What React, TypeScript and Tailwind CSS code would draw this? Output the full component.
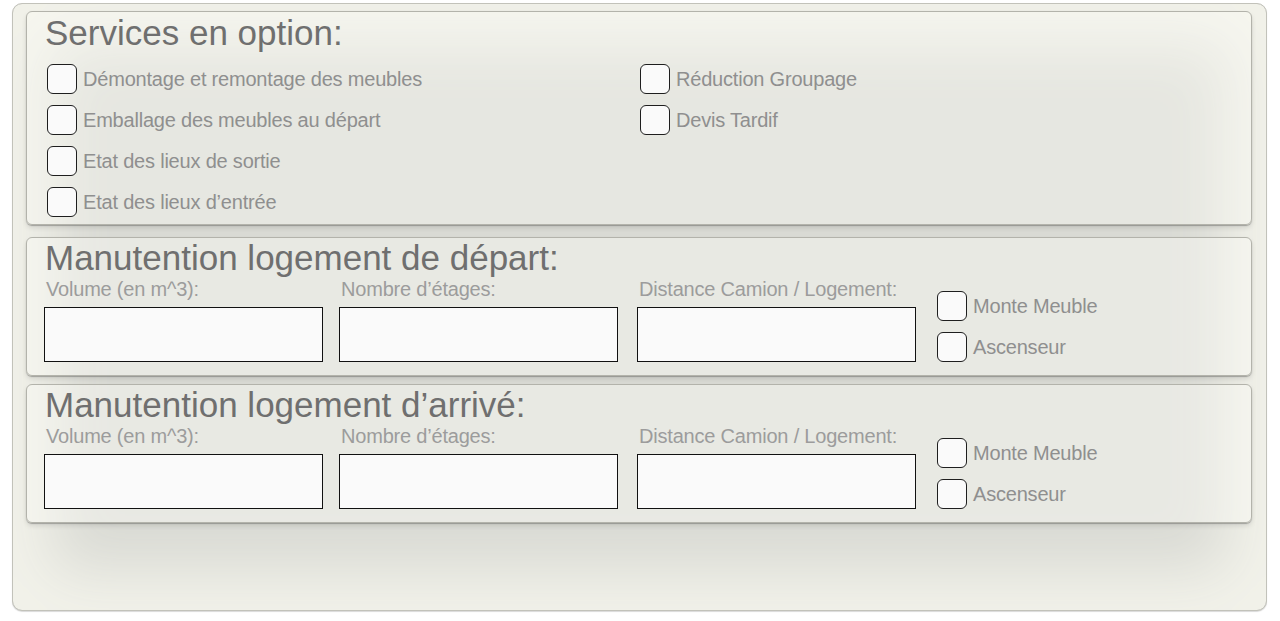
import React from 'react';

const font = { fontFamily: '"Liberation Sans", Arial, sans-serif' };

// Rounded checkbox with a grey label beside it
const Check: React.FC<{ label: string }> = ({ label }) => (
  <label className="flex items-center h-[30px] gap-[6px]">
    <span className="block w-[30px] h-[30px] rounded-[6px] border border-[#1e1e1e] bg-[#fafafa] shrink-0" />
    <span className="text-[20px] leading-[20px] tracking-[-0.2px] text-[#8f8f8f] whitespace-nowrap">{label}</span>
  </label>
);

const Field: React.FC<{ label: string; width: string }> = ({ label, width }) => (
  <div className={`flex flex-col ${width}`}>
    <span className="pl-[2px] text-[20px] leading-[20px] tracking-[-0.2px] text-[#9c9c9c] whitespace-nowrap">{label}</span>
    <div className="mt-[8px] w-[279px] h-[55px] border border-[#111] bg-[#fafafa]" />
  </div>
);

const Manutention: React.FC<{ title: string; className?: string }> = ({ title, className }) => (
  <section
    className={`h-[139px] rounded-[6px] border border-[#b3b3ab] bg-[rgba(255,255,250,0.4)] shadow-[0_1px_1px_rgba(0,0,0,0.25),0_3px_5px_rgba(0,0,0,0.1)] pl-[17px] pt-[6px] ${className ?? ''}`}
  >
    <h2 className="text-[35px] leading-[28px] text-[#6f6f6f] pl-[1px]">{title}</h2>
    <div className="flex items-end mt-[7px]">
      <Field label="Volume (en m^3):" width="w-[295px]" />
      <Field label="Nombre d’étages:" width="w-[298px]" />
      <Field label="Distance Camion / Logement:" width="w-[300px]" />
      <div className="flex flex-col gap-[11px]">
        <Check label="Monte Meuble" />
        <Check label="Ascenseur" />
      </div>
    </div>
  </section>
);

export default function App() {
  return (
    <div className="min-h-screen bg-white pt-[3px] pl-[12px]" style={font}>
      <div className="w-[1255px] h-[608px] rounded-[10px] border border-[#c2c2ba] bg-[#d9dad4] shadow-[inset_0_0_60px_40px_#f2f2ea,0_1px_1px_rgba(0,0,0,0.15)] pl-[13px] pr-[14px] pt-[7px]">
        {/* Services en option */}
        <section className="h-[214px] rounded-[6px] border border-[#b3b3ab] bg-[rgba(255,255,250,0.35)] shadow-[0_1px_1px_rgba(0,0,0,0.25),0_3px_5px_rgba(0,0,0,0.1)] pl-[18px] pt-[3px]">
          <h2 className="text-[35px] leading-[35px] text-[#6f6f6f]">Services en option:</h2>
          <div className="grid grid-cols-[593px_1fr] mt-[14px] pl-[2px]">
            <div className="flex flex-col gap-[11px]">
              <Check label="Démontage et remontage des meubles" />
              <Check label="Emballage des meubles au départ" />
              <Check label="Etat des lieux de sortie" />
              <Check label="Etat des lieux d’entrée" />
            </div>
            <div className="flex flex-col gap-[11px]">
              <Check label="Réduction Groupage" />
              <Check label="Devis Tardif" />
            </div>
          </div>
        </section>

        <Manutention title="Manutention logement de départ:" className="mt-[12px]" />
        <Manutention title="Manutention logement d’arrivé:" className="mt-[8px]" />
      </div>
    </div>
  );
}
